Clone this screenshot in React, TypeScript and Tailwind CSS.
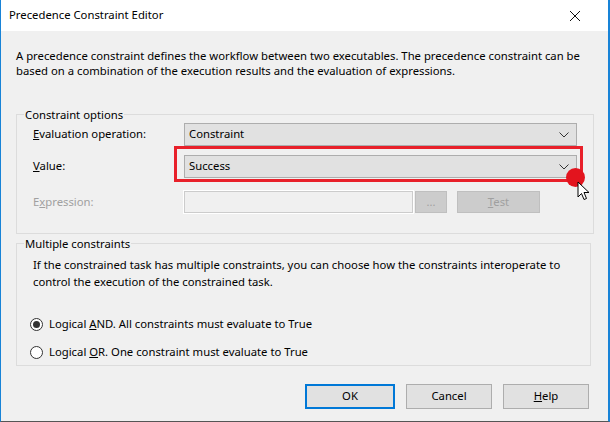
import React from "react";

const font = { fontFamily: '"Noto Sans", "Open Sans", sans-serif' };

function Chevron() {
  return (
    <svg className="h-[6px] w-[10px]" viewBox="0 0 10 6" fill="none" stroke="#333" strokeWidth="1">
      <polyline points="0.5 0.5 5 5 9.5 0.5" />
    </svg>
  );
}

function Combo({ value }: { value: string }) {
  return (
    <div className="flex h-[23px] w-[393px] items-center justify-between border border-[#adadad] bg-[#e1e1e1] pl-[4px] pr-[7px] text-black">
      <span>{value}</span>
      <Chevron />
    </div>
  );
}

function Radio({ checked, children }: { checked?: boolean; children: React.ReactNode }) {
  return (
    <div className="flex items-center gap-[6px]">
      <span className="flex h-[13px] w-[13px] items-center justify-center rounded-full border border-[#333] bg-white">
        {checked && <span className="h-[7px] w-[7px] rounded-full bg-[#333]" />}
      </span>
      <span>{children}</span>
    </div>
  );
}

function Cursor() {
  return (
    <svg className="h-[20px] w-[14px]" viewBox="0 0 14 20">
      <path d="M1 1 L1 16 L4.5 12.5 L7 18.5 L9.5 17.5 L7 11.5 L12 11.5 Z" fill="white" stroke="black" strokeWidth="1" strokeLinejoin="round" />
    </svg>
  );
}

export default function App() {
  return (
    <div
      className="flex h-[422px] w-[610px] flex-col overflow-hidden whitespace-nowrap border-b border-l border-r-2 border-b-[#555] border-l-[#1883d7] border-r-[#1883d7] bg-[#f0f0f0] text-[11.3px] text-black"
      style={font}
    >
      {/* Title bar */}
      <div className="flex h-[31px] shrink-0 items-center justify-between bg-white pl-[8px] pr-[28px]">
        <span>Precedence Constraint Editor</span>
        <svg className="h-[10px] w-[10px]" viewBox="0 0 10 10" stroke="#111" strokeWidth="1">
          <line x1="0" y1="0" x2="10" y2="10" />
          <line x1="10" y1="0" x2="0" y2="10" />
        </svg>
      </div>

      <div className="flex flex-1 flex-col px-[15px]">
        <p className="mt-[17px] leading-[15px]">
          A precedence constraint defines the workflow between two executables. The precedence constraint can be
          <br />
          based on a combination of the execution results and the evaluation of expressions.
        </p>

        {/* Constraint options */}
        <fieldset className="mt-[29px] h-[127px] w-[575px] border border-[#dcdcdc] px-[16px] pt-0">
          <legend className="ml-[-9px] px-[1px] leading-[15px]">Constraint options</legend>
          <div className="relative mt-[1px] flex flex-col">
            <div className="flex items-center">
              <span className="w-[151px]">
                <u>E</u>valuation operation:
              </span>
              <Combo value="Constraint" />
            </div>
            <div className="mt-[9px] flex items-center">
              <span className="w-[151px]">
                <u>V</u>alue:
              </span>
              <Combo value="Success" />
            </div>
            <div className="mt-[13px] flex items-center text-[#a0a0a0]">
              <span className="w-[151px]">
                E<u>x</u>pression:
              </span>
              <div className="h-[22px] w-[229px] border border-[#cccccc] bg-[#f0f0f0] outline outline-1 outline-white" />
              <div className="ml-[2px] flex h-[22px] w-[32px] items-center justify-center border border-[#bfbfbf] bg-[#cccccc] text-[11px]">
                ...
              </div>
              <div className="ml-[10px] flex h-[22px] w-[83px] items-center justify-center border border-[#bfbfbf] bg-[#cccccc]">
                <span>
                  <u>T</u>est
                </span>
              </div>
            </div>

            {/* highlight annotation */}
            <div className="absolute left-[141px] top-[23px] h-[36px] w-[409px] border-[3px] border-[#e8202a]" />
            <div className="absolute left-[533px] top-[45px] h-[19px] w-[19px] rounded-full bg-[#e3141e]" />
            <div className="absolute left-[544px] top-[58px]">
              <Cursor />
            </div>
          </div>
        </fieldset>

        {/* Multiple constraints */}
        <fieldset className="mt-[2px] h-[130px] w-[575px] border border-[#dcdcdc] px-[16px] pt-0">
          <legend className="ml-[-9px] px-[1px] leading-[15px]">Multiple constraints</legend>
          <p className="mt-[5px] leading-[17px]">
            If the constrained task has multiple constraints, you can choose how the constraints interoperate to
            <br />
            control the execution of the constrained task.
          </p>
          <div className="ml-[-3px] mt-[26px] flex flex-col gap-[11px]">
            <Radio checked>
              Logical <u>A</u>ND. All constraints must evaluate to True
            </Radio>
            <Radio>
              Logical <u>O</u>R. One constraint must evaluate to True
            </Radio>
          </div>
        </fieldset>

        {/* Buttons */}
        <div className="mt-[18px] flex justify-end gap-[11px] pr-[4px]">
          <button className="h-[25px] w-[90px] border-2 border-[#0078d7] bg-[#e1e1e1]">OK</button>
          <button className="h-[25px] w-[86px] border border-[#adadad] bg-[#e1e1e1]">Cancel</button>
          <button className="h-[25px] w-[86px] border border-[#adadad] bg-[#e1e1e1]">
            <u>H</u>elp
          </button>
        </div>
      </div>
    </div>
  );
}
